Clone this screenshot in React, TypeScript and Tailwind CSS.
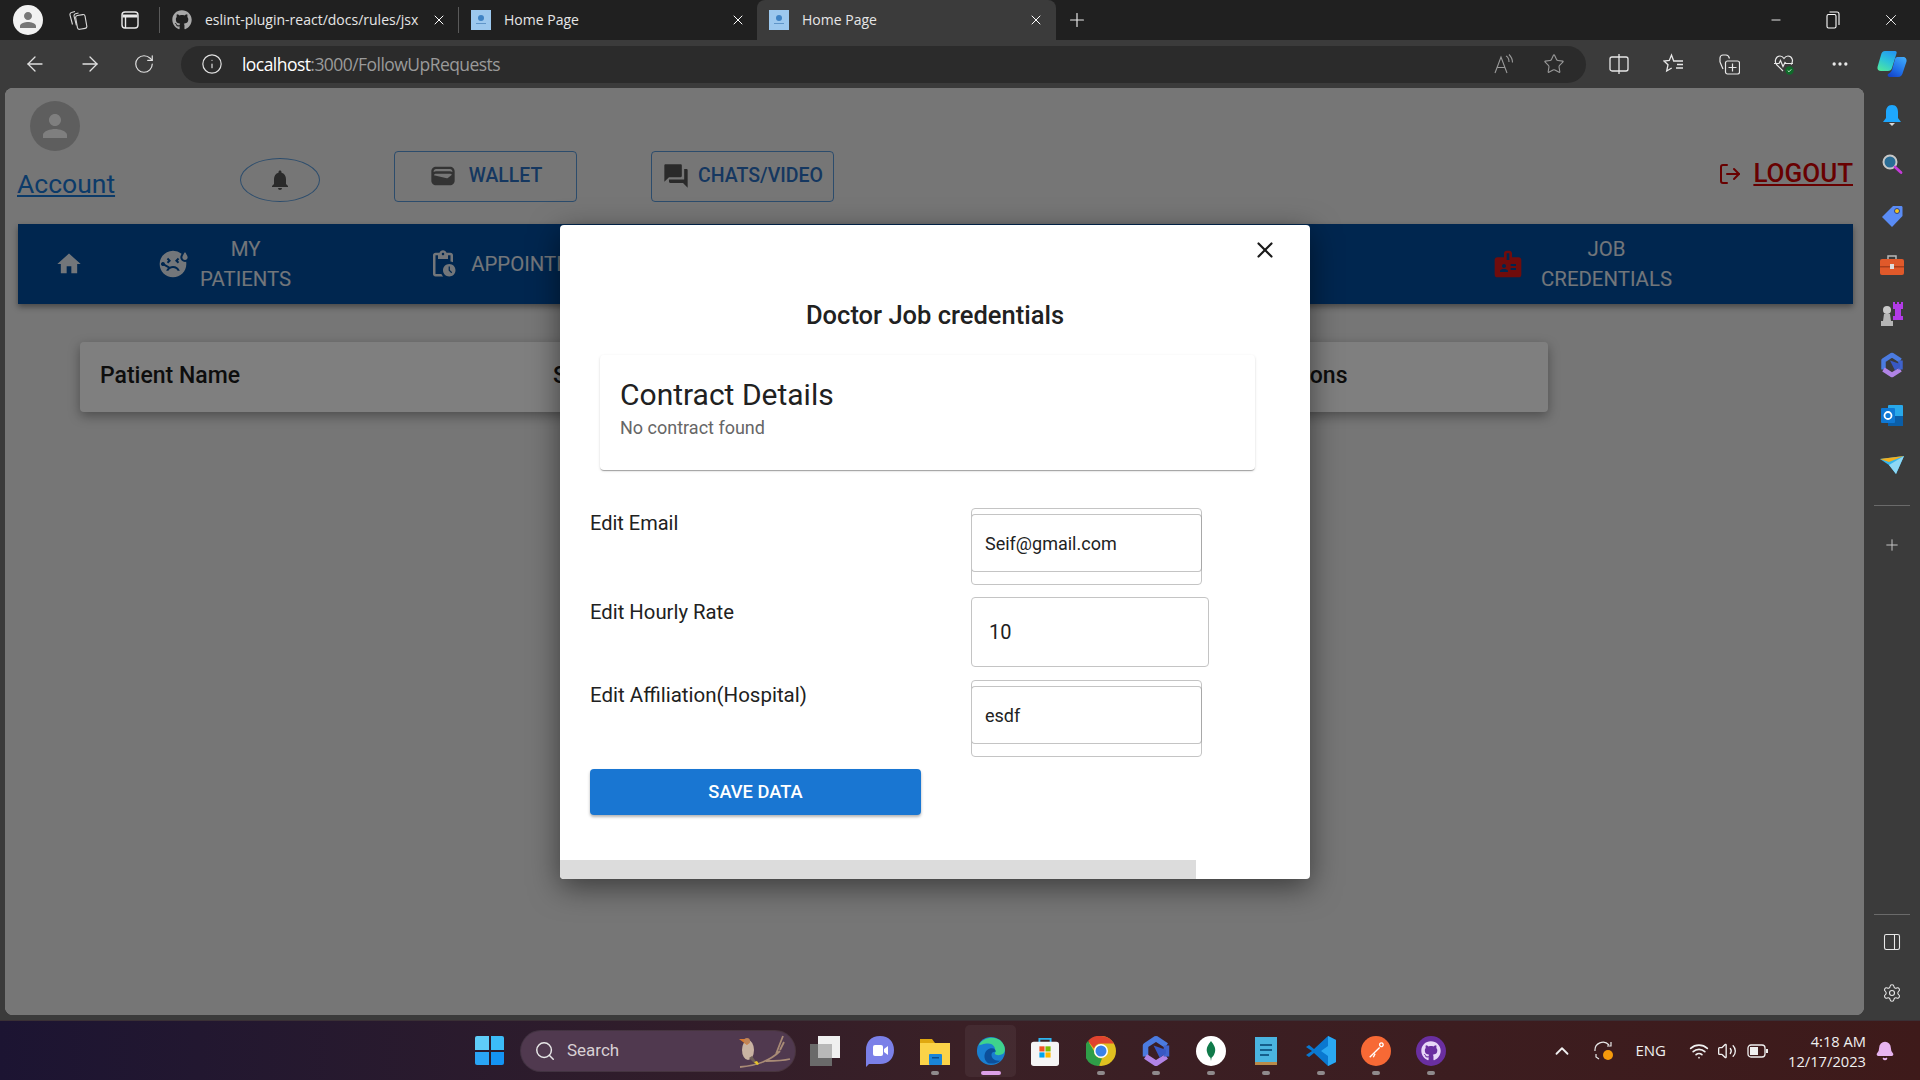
import React from "react";
import {
  ArrowLeft,
  ArrowRight,
  RotateCw,
  Info,
  Star,
  MoreHorizontal,
  X,
  Plus,
  Minus,
  Settings,
  PanelRight,
  Search,
  ChevronUp,
  Wifi,
  Volume2,
  LogOut,
  Bell,
} from "lucide-react";
import { FaGithub } from "react-icons/fa";
import {
  MdWallet,
  MdForum,
  MdHome,
  MdNotifications,
  MdPerson,
  MdSick,
  MdPendingActions,
  MdBadge,
} from "react-icons/md";

const roboto = { fontFamily: "Roboto, sans-serif" };
const openSans = { fontFamily: "'Open Sans', sans-serif" };

const Favicon = () => (
  <div className="flex h-5 w-5 shrink-0 flex-col items-center justify-center bg-[#9cc8ee]">
    <div className="h-[6px] w-[6px] rounded-full bg-[#3f83c4]" />
    <div className="mt-[2px] h-px w-[10px] bg-[#5f95c8]" />
  </div>
);

const BrowserTab = ({
  title,
  active,
  github,
}: {
  title: string;
  active?: boolean;
  github?: boolean;
}) => (
  <div
    className={`flex h-full shrink-0 items-center pb-[1px] pl-3 ${
      active ? "w-[299px] rounded-t-lg bg-[#3b3b3b]" : "w-[298px]"
    }`}
  >
    {github ? <FaGithub className="h-5 w-5 shrink-0 text-[#a8a8a8]" /> : <Favicon />}
    <span
      className={`ml-[13px] w-[222px] overflow-hidden whitespace-nowrap text-[14px] text-[#e6e6e6] ${
        github ? "pr-[3px]" : ""
      }`}
    >
      {title}
    </span>
    <X className="ml-[4px] h-4 w-4 shrink-0 text-white" strokeWidth={1.5} />
  </div>
);

const CollectionsIcon = () => (
  <svg viewBox="0 0 20 20" className="h-5 w-5" fill="none" stroke="#d8d8d8" strokeWidth="1.100">
    <rect x="8.500" y="5" width="9.500" height="14" rx="2" transform="rotate(-10 13 12)" />
    <path d="M10.500 3 7.500 3.800a2 2 0 0 0-1.400 2.500l2.300 9" />
    <path d="M7 1.500 3.500 2.500A2 2 0 0 0 2 5l2.500 9.500" />
  </svg>
);

const TabsIcon = () => (
  <svg viewBox="0 0 20 20" className="h-5 w-5" fill="none" stroke="#e8e8e8" strokeWidth="1.400">
    <rect x="2" y="2" width="16" height="16" rx="3" />
    <path d="M2.500 6h15" strokeWidth="3" />
    <path d="M5.500 7v11" />
  </svg>
);

const RestoreIcon = () => (
  <svg viewBox="0 0 14 18" className="h-[18px] w-[14px]" fill="none" stroke="#fff" strokeWidth="1.100">
    <rect x="1" y="3.500" width="9" height="13.500" rx="1.500" />
    <path d="M3.500 1h7.500a2 2 0 0 1 2 2v11" />
  </svg>
);

const SplitIcon = () => (
  <svg viewBox="0 0 22 22" className="h-[22px] w-[22px]" fill="none" stroke="#e8e8e8" strokeWidth="1.300">
    <rect x="2" y="4" width="18" height="14" rx="2" />
    <path d="M11 1v20" />
  </svg>
);

const FavoritesIcon = () => (
  <svg viewBox="0 0 22 22" className="h-[22px] w-[22px]" fill="none" stroke="#e8e8e8" strokeWidth="1.300">
    <path d="M20 8h-9.300L8.500 2 6.300 7.500 1 8l4 3.700L3.700 18l5-3" />
    <path d="M14 11.500h6M13 15h7" />
  </svg>
);

const AddCollectionIcon = () => (
  <svg viewBox="0 0 22 22" className="h-[22px] w-[22px]" fill="none" stroke="#e8e8e8" strokeWidth="1.200">
    <path d="M2 9V5a3 3 0 0 1 3-3h3c2 0 3 1.500 3.500 3.500M2 9l3 7" />
    <rect x="7.500" y="8" width="14" height="13" rx="2" />
    <path d="M14.500 10.500v8M10.500 14.500h8" />
  </svg>
);

const HealthIcon = () => (
  <svg viewBox="0 0 22 22" className="h-[22px] w-[22px]" fill="none">
    <path
      d="M10 18 3.500 11.500C1 8 3 3 7 3c2 0 3 1 4 2.500C12 4 13 3 15 3c4 0 6 5 3 8.500"
      stroke="#e8e8e8"
      strokeWidth="1.200"
    />
    <path d="M1 10.500h5l1.500-3 2.500 6 2-4 1 1h7" stroke="#e8e8e8" strokeWidth="1.200" />
    <circle cx="16.500" cy="17.500" r="4.200" fill="#0f6a2a" />
    <path d="m14.700 17.500 1.300 1.300 2.300-2.500" stroke="#bfe8c8" strokeWidth="1" />
  </svg>
);

const CopilotIcon = () => (
  <svg viewBox="0 0 30 26" className="h-[26px] w-[30px]">
    <defs>
      <linearGradient id="copilotLeft" x1="0.700" y1="0" x2="0.200" y2="1">
        <stop offset="0" stopColor="#2499f0" />
        <stop offset="0.500" stopColor="#2cc4d8" />
        <stop offset="1" stopColor="#4fe6a0" />
      </linearGradient>
      <linearGradient id="copilotRight" x1="0.800" y1="0" x2="0.200" y2="1">
        <stop offset="0" stopColor="#3fa8f8" />
        <stop offset="0.600" stopColor="#1f6fe8" />
        <stop offset="1" stopColor="#1545c8" />
      </linearGradient>
    </defs>
    <path d="M8 0h10c1.500 0 2 1 1.500 2.500L15 17c-.5 2-2 3-4 3H4c-2.500 0-4-1.500-3.500-4L4 4c.5-2.500 2-4 4-4Z" fill="url(#copilotLeft)" />
    <path d="M21 6h5c2.500 0 4 2 3.500 4.500L26 21c-.5 3-2.500 5-5 5h-8c-2 0-3-1.500-2-3 1-.5 3-1.500 4-4l3-11c.5-1.500 1.500-2 3-2Z" fill="url(#copilotRight)" />
  </svg>
);

const ReadAloudIcon = () => (
  <svg viewBox="0 0 22 22" className="h-[22px] w-[22px]" fill="none" stroke="#9a9a9a" strokeWidth="1.100">
    <path d="M2 20 8 4l6 16M4.500 14.500h7" />
    <path d="M13 3c2 1 3 3 3 6M16 1.500c2 2 3.500 4.500 3.500 8" />
  </svg>
);

const SideBell = () => (
  <svg viewBox="0 0 24 24" className="h-6 w-6">
    <path d="M12 1c4.500 0 6 3.500 6 7v6l3 4H3l3-4V8c0-3.500 1.500-7 6-7Z" fill="#1ea7fd" />
    <path d="M9 19h6l-3 3Z" fill="#d8d8d8" />
  </svg>
);

const SideSearch = () => (
  <svg viewBox="0 0 22 22" className="h-[22px] w-[22px]">
    <circle cx="9" cy="9" r="6.500" fill="#2a6d96" stroke="#c8c8c8" strokeWidth="2" />
    <path d="m14 14 6 5.500" stroke="#c43bd8" strokeWidth="2.800" strokeLinecap="round" />
  </svg>
);

const SideTag = () => (
  <svg viewBox="0 0 22 24" className="h-6 w-[22px]">
    <path d="M12 2h8c1 0 1.500.5 1.500 1.500V12L11 23 1 13Z" fill="#5a8cf5" />
    <circle cx="16" cy="7" r="2.500" fill="#f2c51c" stroke="#2b3f8c" />
  </svg>
);

const SideToolbox = () => (
  <svg viewBox="0 0 24 22" className="h-[22px] w-6">
    <path d="M8 5V2h8v3" fill="none" stroke="#b9b9b9" strokeWidth="1.500" />
    <rect x="0" y="5" width="24" height="16" rx="2" fill="#e0592a" />
    <rect x="0" y="12" width="24" height="1.500" fill="#a83e1c" />
    <rect x="10" y="10" width="4" height="5" fill="#ddd" />
  </svg>
);

const SideChess = () => (
  <svg viewBox="0 0 24 26" className="h-[26px] w-6">
    <path d="M13 1h2v2h2V1h2v2h2V1h2v7h-2v7h2v4H13v-4h2V8h-2Z" fill="#b23be8" />
    <circle cx="7" cy="9" r="4" fill="#c9c9c9" />
    <path d="M4 13h6l1 7h2v5H1v-5h2Z" fill="#b5b5b5" />
  </svg>
);

const HexCopilot = ({ size = 26 }: { size?: number }) => (
  <svg viewBox="0 0 24 26" width={size} height={size} fill="none" strokeLinejoin="round">
    <path d="M3.500 17.500v-9L12 3l8.500 5.500" stroke="#4b7be0" strokeWidth="4.500" />
    <path d="M3.500 17.500 12 23l8.500-5.500" stroke="#b184e6" strokeWidth="4.500" />
    <path d="M20.500 8.500v9" stroke="#3f63cc" strokeWidth="4.500" />
    <path d="M10 8.500 20 12v3l-5 3.500Z" fill="#3858c4" />
  </svg>
);

const SideOutlook = () => (
  <svg viewBox="0 0 24 24" className="h-6 w-6">
    <rect x="8" y="1" width="15" height="21" rx="1" fill="#28a8ea" />
    <path d="M8 12h15v10H8Z" fill="#0a5ea8" />
    <rect x="1" y="4" width="14" height="15" rx="1" fill="#0f78d4" />
    <circle cx="8" cy="11.500" r="3.500" fill="none" stroke="#fff" strokeWidth="1.800" />
  </svg>
);

const SideSend = () => (
  <svg viewBox="0 0 24 20" className="h-5 w-6">
    <path d="M0 4 24 1 16 19 9 10Z" fill="#35b6ee" />
    <path d="M0 4 24 1 9 7Z" fill="#f2b01e" />
    <path d="M9 10 24 1 16 19Z" fill="#8fd8f5" />
  </svg>
);

const WinLogo = () => (
  <div className="grid h-[29px] w-[29px] grid-cols-2 gap-[2px]">
    <div className="rounded-tl-[2px] bg-[#5fcdf8]" />
    <div className="rounded-tr-[2px] bg-[#3cbcf8]" />
    <div className="rounded-bl-[2px] bg-[#2aa5f5]" />
    <div className="rounded-br-[2px] bg-[#1493f3]" />
  </div>
);

const Bird = () => (
  <svg viewBox="0 0 54 34" className="h-[34px] w-[54px]">
    <path d="M2 33c14-1 30-6 40-16M28 27c8 0 16 0 24-2M38 20l7-18M42 16l4-8" stroke="#a98b76" strokeWidth="1.800" fill="none" />
    <ellipse cx="10" cy="16" rx="6" ry="10" fill="#c9b3a2" />
    <path d="M5 8 1 5l7 0 4 3-3 3Z" fill="#d9792e" />
    <circle cx="9" cy="7" r="3" fill="#c08458" />
    <path d="M11 24l6 6 2-1-5-7Z" fill="#6e5f56" />
    <path d="M16 28l3 3 2-1-2-3Z" fill="#e8c42a" />
  </svg>
);

const TaskView = () => (
  <div className="relative h-[30px] w-[30px]">
    <div className="absolute bottom-0 left-0 h-[22px] w-[22px] bg-[#6a6a6a]" />
    <div className="absolute right-0 top-0 h-[22px] w-[22px] bg-[#f0f0f0]" />
    <div className="absolute left-2 top-2 h-[14px] w-[14px] bg-[#b8b8b8]" />
  </div>
);

const TeamsIcon = () => (
  <svg viewBox="0 0 30 32" className="h-8 w-[30px]">
    <path d="M15 1c9 0 14 6 14 14s-5 14-14 14H4l-3 3v-17C1 7 6 1 15 1Z" fill="#7b80e8" />
    <rect x="8" y="10" width="10" height="11" rx="2" fill="#fff" />
    <path d="m19 14 4-3v9l-4-3Z" fill="#fff" />
  </svg>
);

const FolderIcon = () => (
  <svg viewBox="0 0 30 28" className="h-7 w-[30px]">
    <path d="M0 2h12l3 4h15v22H0Z" fill="#e0a810" />
    <rect x="0" y="6" width="30" height="22" fill="#fbd348" />
    <rect x="9" y="17" width="13" height="11" rx="1" fill="#1a85d8" />
    <rect x="12" y="20" width="7" height="1.500" fill="#0d4f8c" />
  </svg>
);

const EdgeIcon = () => (
  <svg viewBox="0 0 32 32" className="h-[30px] w-[30px]">
    <circle cx="16" cy="16" r="15" fill="#1a7fd0" />
    <path d="M3 10C7 1 22-1 28 7c3 4 4 9 1 12-3 2-8 2-9 0 2-5-1-11-7-11-5 0-9 2-10 2Z" fill="#3fd38c" />
    <path d="M13 29C6 24 9 13 17 13c3 0 4 2 4 4-4-1-6 3-3 7 2 2 6 3 8 2-3 3-8 4-13 3Z" fill="#0c4f9a" />
  </svg>
);

const StoreIcon = () => (
  <svg viewBox="0 0 30 32" className="h-[30px] w-7">
    <path d="M9 7V3h12v4" fill="none" stroke="#2eb5f0" strokeWidth="2" />
    <rect x="0" y="6" width="30" height="26" rx="3" fill="#f5f5f5" />
    <rect x="9" y="11" width="5.500" height="5.500" fill="#f25022" />
    <rect x="15.500" y="11" width="5.500" height="5.500" fill="#7fba00" />
    <rect x="9" y="17.500" width="5.500" height="5.500" fill="#00a4ef" />
    <rect x="15.500" y="17.500" width="5.500" height="5.500" fill="#ffb900" />
  </svg>
);

const ChromeIcon = () => (
  <svg viewBox="0 0 30 30" className="h-[30px] w-[30px]">
    <circle cx="15" cy="15" r="15" fill="#e0c020" />
    <path d="M15 0a15 15 0 0 1 13 7.500H15a7.500 7.500 0 0 0-7 5L2 5a15 15 0 0 1 13-5Z" fill="#e0432f" />
    <path d="M2 5l6 10a7.500 7.500 0 0 0 8 7.500L13 30A15 15 0 0 1 2 5Z" fill="#2f9e48" />
    <circle cx="15" cy="15" r="7" fill="#fff" />
    <circle cx="15" cy="15" r="5.500" fill="#3b82e8" />
  </svg>
);

const MongoIcon = () => (
  <div className="flex h-[30px] w-[30px] items-center justify-center rounded-full bg-white">
    <svg viewBox="0 0 10 20" className="h-5 w-[10px]">
      <path d="M5 0c3 4 5 7 4 11s-3 5-3.500 6L5 20l-.500-3C4 16 2 15 1 11S2 4 5 0Z" fill="#107a4a" />
    </svg>
  </div>
);

const NotepadIcon = () => (
  <svg viewBox="0 0 24 30" className="h-[30px] w-6">
    <rect x="1" y="1" width="22" height="26" fill="#4ab4e0" />
    <rect x="1" y="26" width="22" height="3" fill="#b98a4a" />
    <path d="M6 9h12M6 14h12M6 19h9" stroke="#155e8c" strokeWidth="2" />
  </svg>
);

const VSCodeIcon = () => (
  <svg viewBox="0 0 30 30" className="h-[30px] w-[30px]">
    <path d="M22 0 30 4v22l-8 4-14-13-5 4-3-2 6-4-6-4 3-2 5 4Z" fill="#0a78d0" />
    <path d="M22 0 30 4v22l-8 4V20l-7-5 7-5Z" fill="#2aa8f2" />
  </svg>
);

const PostmanIcon = () => (
  <div className="flex h-[30px] w-[30px] items-center justify-center rounded-full bg-[#f76935]">
    <svg viewBox="0 0 20 20" className="h-[18px] w-[18px]" fill="none" stroke="#fff" strokeWidth="1.500">
      <path d="M3 17 14 6M9 13l-2 4M14 3a2 2 0 1 1 0 .1" />
    </svg>
  </div>
);

const GithubDesktop = () => (
  <div className="flex h-[30px] w-[30px] items-center justify-center rounded-full bg-[#6a2fa0]">
    <FaGithub className="h-5 w-5 text-[#e8d8f8]" />
  </div>
);

const SyncIcon = () => (
  <svg viewBox="0 0 22 22" className="h-[22px] w-[22px]" fill="none">
    <path d="M2 11a8 8 0 0 1 14-6M18 2v4h-4M6 19l-3-2v-3" stroke="#e8e8e8" strokeWidth="1.200" />
    <circle cx="15" cy="15" r="5" fill="#f59a0c" />
  </svg>
);

const BatteryIcon = () => (
  <svg viewBox="0 0 22 14" className="h-[14px] w-[22px]" fill="none">
    <rect x="1" y="1" width="17" height="12" rx="3" stroke="#f0f0f0" strokeWidth="1.300" />
    <rect x="3" y="3" width="8" height="8" fill="#f0f0f0" />
    <rect x="19" y="5" width="2" height="4" fill="#f0f0f0" />
  </svg>
);

const AppSlot = ({
  children,
  dot,
  active,
}: {
  children: React.ReactNode;
  dot?: boolean;
  active?: boolean;
}) => (
  <div
    className={`relative flex h-[50px] w-[49px] shrink-0 items-center justify-center rounded ${
      active ? "bg-white/5 ring-1 ring-white/5" : ""
    }`}
  >
    {children}
    {dot && <div className="absolute bottom-[1px] h-1 w-2 rounded-full bg-[#8f8a8c]" />}
    {active && <div className="absolute bottom-[1px] h-1 w-5 rounded-full bg-[#dca0e8]" />}
  </div>
);

const NavItem = ({
  icon,
  line1,
  line2,
  className,
}: {
  icon: React.ReactNode;
  line1: string;
  line2?: string;
  className: string;
}) => (
  <div className={`flex shrink-0 items-center ${className}`}>
    {icon}
    <div className="text-center text-[20.4px] leading-[30px] text-white/90">
      <div>{line1}</div>
      {line2 && <div>{line2}</div>}
    </div>
  </div>
);

const FieldInput = ({ value }: { value: string }) => (
  <div className="h-[77px] w-[231px] rounded border border-[#c4c4c4] pt-[5px]">
    <div className="-mx-px flex h-[58px] items-center rounded border border-[#c4c4c4] border-r-[#a8a8a8] pl-[13px] text-[18px] text-[#222]">
      {value}
    </div>
  </div>
);

const App = () => {
  return (
    <div className="flex h-screen w-screen flex-col overflow-hidden bg-[#3b3b3b]" style={roboto}>
      {/* tab strip */}
      <div className="flex h-10 shrink-0 items-center bg-[#202020]" style={openSans}>
        <div className="ml-[13px] flex h-[30px] w-[30px] items-center justify-center rounded-full bg-[#f2f2f2]">
          <MdPerson className="h-6 w-6 text-[#777]" />
        </div>
        <div className="ml-[25px]">
          <CollectionsIcon />
        </div>
        <div className="ml-8">
          <TabsIcon />
        </div>
        <div className="ml-[19px] h-[26px] w-px bg-[#5a5a5a]" />
        <BrowserTab title="eslint-plugin-react/docs/rules/jsx" github />
        <div className="h-[26px] w-px bg-[#5a5a5a]" />
        <BrowserTab title="Home Page" />
        <BrowserTab title="Home Page" active />
        <Plus className="ml-[10px] h-[22px] w-[22px] text-[#e8e8e8]" strokeWidth={1.3} />
        <div className="flex-1" />
        <Minus className="h-[14px] w-[14px] text-white" strokeWidth={1.5} />
        <div className="ml-[43px]">
          <RestoreIcon />
        </div>
        <X className="ml-[42px] mr-[20px] h-[18px] w-[18px] text-white" strokeWidth={1.2} />
      </div>

      {/* address bar */}
      <div className="flex h-12 shrink-0 items-center bg-[#3b3b3b]">
        <ArrowLeft className="ml-[23px] h-6 w-6 text-[#e0e0e0]" strokeWidth={1.3} />
        <ArrowRight className="ml-[31px] h-6 w-6 text-[#e0e0e0]" strokeWidth={1.3} />
        <RotateCw className="ml-[31px] h-[22px] w-[22px] text-[#e0e0e0]" strokeWidth={1.3} />
        <div className="ml-[26px] flex h-[37px] w-[1405px] items-center rounded-full bg-[#2b2b2b]">
          <Info className="ml-[20px] h-[22px] w-[22px] text-[#e0e0e0]" strokeWidth={1.3} />
          <span className="ml-[19px] text-[17.5px] tracking-[-0.55px]" style={openSans}>
            <span className="text-white">localhost</span>
            <span className="text-[#9a9a9a]">:3000/FollowUpRequests</span>
          </span>
          <div className="flex-1" />
          <ReadAloudIcon />
          <Star className="ml-[28px] mr-[21px] h-[22px] w-[22px] text-[#9a9a9a]" strokeWidth={1.2} />
        </div>
        <div className="ml-[22px]">
          <SplitIcon />
        </div>
        <div className="ml-[33px]">
          <FavoritesIcon />
        </div>
        <div className="ml-[33px]">
          <AddCollectionIcon />
        </div>
        <div className="ml-[33px]">
          <HealthIcon />
        </div>
        <MoreHorizontal className="ml-[35px] h-5 w-5 text-[#e8e8e8]" />
        <div className="ml-[27px]">
          <CopilotIcon />
        </div>
      </div>

      <div className="flex min-h-0 flex-1">
        {/* page */}
        <div className="relative mb-[5px] ml-[5px] w-[1859px] overflow-hidden rounded-lg bg-[#ececec]">
          <div className="pl-[13px] pr-[11px] pt-[13px]">
            <div className="ml-[12px] flex h-[50px] w-[50px] items-center justify-center rounded-full bg-[#bdbdbd]">
              <MdPerson className="h-9 w-9 text-white" />
            </div>
            <div className="flex items-start">
              <a className="-ml-px mt-[16px] w-[98px] text-[26.5px] leading-[33px] text-[#1976d2] underline">Account</a>
              <div className="ml-[125px] mt-[7px] flex h-[44px] w-[80px] items-center justify-center rounded-[50%] border border-[#1976d2]/70">
                <MdNotifications className="h-6 w-6 text-[#555]" />
              </div>
              <div className="ml-[74px] flex h-[51px] w-[183px] items-center justify-center rounded border border-[#1976d2]/70 pb-[2px] text-[19.4px] font-medium text-[#2a6fc0]">
                <MdWallet className="mr-[12px] h-7 w-7 text-[#666]" />
                WALLET
              </div>
              <div className="ml-[74px] flex h-[51px] w-[183px] items-center justify-center rounded border border-[#1976d2]/70 pb-[2px] text-[19.5px] font-medium text-[#2a6fc0]">
                <MdForum className="mr-[8px] h-7 w-7 text-[#555]" />
                CHATS/VIDEO
              </div>
              <div className="flex-1" />
              <div className="mt-[6px] flex items-center text-[#d00000]">
                <LogOut className="h-[24px] w-[24px]" strokeWidth={2} />
                <a className="ml-[11px] text-[26px] font-medium leading-[33px] underline">LOGOUT</a>
              </div>
            </div>
            {/* nav */}
            <div className="mt-[22px] flex h-20 items-center bg-[#004c9e] shadow-[0_3px_6px_rgba(0,0,0,0.4)]">
              <MdHome className="ml-[37px] h-7 w-7 text-white/90" />
              <NavItem
                className="ml-[74px] gap-[11px]"
                line1="MY"
                line2="PATIENTS"
                icon={<MdSick className="h-8 w-8 text-white/90" />}
              />
              <NavItem
                className="ml-[137px] gap-[13px]"
                line1="APPOINTMENTS"
                icon={<MdPendingActions className="h-[30px] w-[30px] text-white/90" />}
              />
              <div className="flex-1" />
              <NavItem
                className="mr-[181px] gap-[17px]"
                line1="JOB"
                line2="CREDENTIALS"
                icon={<MdBadge className="h-8 w-8 text-[#e01818]" />}
              />
            </div>
            {/* table header */}
            <div className="ml-[62px] mt-[38px] flex h-[70px] w-[1468px] items-center rounded bg-white pb-[1px] pl-[20px] text-[23px] font-medium text-[#1a1a1a] shadow-[0_4px_12px_rgba(0,0,0,0.35)]">
              <span className="w-[453px]">Patient Name</span>
              <span className="w-[716px]">Status</span>
              <span>Actions</span>
            </div>
          </div>

          {/* dialog */}
          <div className="absolute inset-0 bg-black/50">
            <div className="absolute left-[555px] top-[137px] flex h-[654px] w-[750px] flex-col overflow-hidden rounded bg-white text-[#212121] shadow-[0_8px_30px_rgba(0,0,0,0.5)]">
              <X className="absolute right-[32px] top-[12px] h-[26px] w-[26px] text-[#1a1a1a]" strokeWidth={2} />
              <div className="mt-[74px] text-center text-[25.5px] font-medium leading-[32px]">Doctor Job credentials</div>
              <div className="ml-10 mt-[24px] h-[115px] w-[655px] rounded px-5 pt-[18px] shadow-[0_2px_1px_-1px_rgba(0,0,0,0.2),0_1px_1px_0_rgba(0,0,0,0.14),0_1px_3px_0_rgba(0,0,0,0.12)]">
                <div className="text-[30px] leading-[44px] text-[#212121]">Contract Details</div>
                <div className="text-[18px] leading-[22px] text-[#666]">No contract found</div>
              </div>
              <div className="ml-[30px] mt-[38px] grid grid-cols-[381px_1fr] gap-y-[12px]">
                <div className="pt-1 text-[20px] leading-[22px]">Edit Email</div>
                <FieldInput value="Seif@gmail.com" />
                <div className="pt-[4px] text-[20.3px] leading-[22px]">Edit Hourly Rate</div>
                <div className="mb-px flex h-[70px] w-[238px] items-center rounded border border-[#c4c4c4] pl-[17px] text-[20px]">10</div>
                <div className="pt-[4px] text-[20.5px] leading-[22px]">Edit Affiliation(Hospital)</div>
                <FieldInput value="esdf" />
              </div>
              <div className="ml-[30px] mt-[12px] flex h-[46px] w-[331px] items-center justify-center rounded bg-[#1976d2] pb-[1px] text-[18.3px] font-medium text-white shadow-[0_2px_3px_rgba(0,0,0,0.3)]">
                SAVE DATA
              </div>
              <div className="flex-1" />
              <div className="h-[19px] w-[636px] bg-[#dcdcdc]" />
            </div>
          </div>
        </div>

        {/* edge sidebar */}
        <div className="flex w-[56px] flex-col items-center">
          <div className="mt-[16px]"><SideBell /></div>
          <div className="mt-[25px]"><SideSearch /></div>
          <div className="mt-[29px]"><SideTag /></div>
          <div className="mt-[26px]"><SideToolbox /></div>
          <div className="mt-[25px]"><SideChess /></div>
          <div className="mt-[25px]"><HexCopilot size={26} /></div>
          <div className="mt-[26px]"><SideOutlook /></div>
          <div className="mt-[27px]"><SideSend /></div>
          <div className="mt-[30px] h-px w-[36px] bg-[#6a6a6a]" />
          <Plus className="mt-[30px] h-[18px] w-[18px] text-[#c8c8c8]" strokeWidth={1.3} />
          <div className="flex-1" />
          <div className="h-px w-[36px] bg-[#6a6a6a]" />
          <PanelRight className="mt-[17px] h-5 w-5 text-[#e8e8e8]" strokeWidth={1.3} />
          <Settings className="mb-[17px] mt-[31px] h-5 w-5 text-[#e8e8e8]" strokeWidth={1.3} />
        </div>
      </div>

      {/* taskbar */}
      <div className="flex h-[60px] shrink-0 items-center border-t border-[#3a3035] bg-gradient-to-r from-[#1c1432] via-[#3a2026] to-[#3e1a1a] text-[#f0f0f0]">
        <div className="ml-[475px]"><WinLogo /></div>
        <div className="ml-[17px] flex h-10 w-[274px] items-center rounded-full bg-[#50394f] ring-1 ring-white/10">
          <Search className="ml-[13px] h-[22px] w-[22px] text-[#e8e8e8]" strokeWidth={1.6} />
          <span className="ml-[11px] text-[17px] text-[#d8d0d4]">Search</span>
          <div className="flex-1" />
          <div className="mr-[3px]"><Bird /></div>
        </div>
        <div className="ml-[5px] flex items-center">
          <AppSlot><TaskView /></AppSlot>
          <div className="ml-[6px]"><AppSlot><TeamsIcon /></AppSlot></div>
          <div className="ml-[6px]"><AppSlot dot><FolderIcon /></AppSlot></div>
          <div className="ml-[7px]"><AppSlot active><EdgeIcon /></AppSlot></div>
          <div className="ml-[5px]"><AppSlot><StoreIcon /></AppSlot></div>
          <div className="ml-[7px]"><AppSlot dot><ChromeIcon /></AppSlot></div>
          <div className="ml-[6px]"><AppSlot dot><HexCopilot size={32} /></AppSlot></div>
          <div className="ml-[6px]"><AppSlot dot><MongoIcon /></AppSlot></div>
          <div className="ml-[6px]"><AppSlot dot><NotepadIcon /></AppSlot></div>
          <div className="ml-[6px]"><AppSlot dot><VSCodeIcon /></AppSlot></div>
          <div className="ml-[6px]"><AppSlot dot><PostmanIcon /></AppSlot></div>
          <div className="ml-[6px]"><AppSlot dot><GithubDesktop /></AppSlot></div>
        </div>
        <div className="flex-1" />
        <ChevronUp className="h-[22px] w-[22px]" strokeWidth={2} />
        <div className="ml-5"><SyncIcon /></div>
        <span className="ml-5 text-[15px]" style={openSans}>ENG</span>
        <Wifi className="ml-[23px] h-5 w-5" strokeWidth={2} />
        <Volume2 className="ml-2 h-5 w-5" strokeWidth={1.6} />
        <div className="ml-[10px]"><BatteryIcon /></div>
        <div className="ml-[19px] text-right text-[14.7px] leading-[20px]" style={openSans}>
          <div>4:18 AM</div>
          <div>12/17/2023</div>
        </div>
        <Bell className="ml-[9px] mr-[25px] h-5 w-5 fill-[#e8b4f0] text-[#e8b4f0]" />
      </div>
    </div>
  );
};

export default App;
